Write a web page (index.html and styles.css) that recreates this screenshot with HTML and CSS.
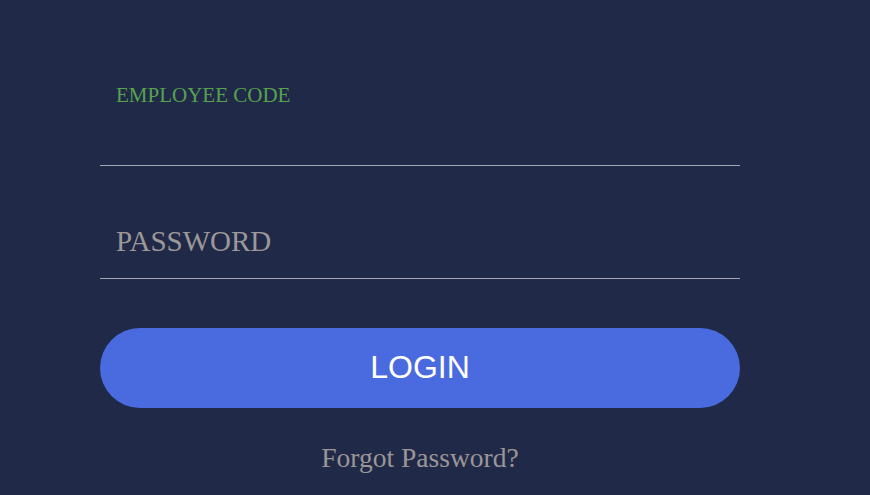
FILE: index.html
```html
<!DOCTYPE html>
<html lang="en">
<head>
<meta charset="utf-8">
<title>Login</title>
<link rel="stylesheet" href="styles.css">
</head>
<body>
<main class="page">
  <form class="login-form">
    <div class="field field-floating">
      <label class="field-label" for="code">EMPLOYEE CODE</label>
      <input class="field-input" id="code" type="text">
    </div>
    <div class="field">
      <input class="field-input" type="password" placeholder="PASSWORD">
    </div>
    <button class="login-button" type="button">LOGIN</button>
    <a class="forgot-link" href="#">Forgot Password?</a>
  </form>
</main>
</body>
</html>
```

FILE: styles.css
```css
html, body {
  margin: 0;
  padding: 0;
  background: #202a48;
}

.page {
  width: 870px;
  height: 495px;
  overflow: hidden;
  background: #202a48;
}

.login-form {
  width: 640px;
  margin-left: 100px;
  padding-top: 65px;
  display: flex;
  flex-direction: column;
}

.field {
  position: relative;
  height: 101px;
  box-sizing: border-box;
  border-bottom: 1px solid #a3a7b5;
  display: flex;
  flex-direction: column;
  justify-content: flex-end;
  margin-bottom: 12px;
}

.field-label {
  position: absolute;
  left: 16px;
  top: 20px;
  font-family: "Liberation Serif", serif;
  font-size: 21px;
  line-height: 1;
  color: #56a24e;
}

.field-input {
  height: 74px;
  box-sizing: border-box;
  border: 0;
  outline: none;
  background: transparent;
  padding: 0 0 0 16px;
  font-family: "Liberation Serif", serif;
  font-size: 29px;
  color: #d0d0d0;
}

.field-input::placeholder {
  color: #9d9898;
  opacity: 1;
}

.login-button {
  margin-top: 37px;
  height: 80px;
  border: 0;
  border-radius: 40px;
  background: #4a6ae0;
  color: #ffffff;
  font-family: "Liberation Sans", Arial, sans-serif;
  font-size: 32px;
  padding: 0 0 2px 0;
  cursor: pointer;
}

.forgot-link {
  margin-top: 35px;
  align-self: center;
  font-family: "Liberation Serif", serif;
  font-size: 27.5px;
  line-height: 30px;
  color: #9b9696;
  text-decoration: none;
}
```
